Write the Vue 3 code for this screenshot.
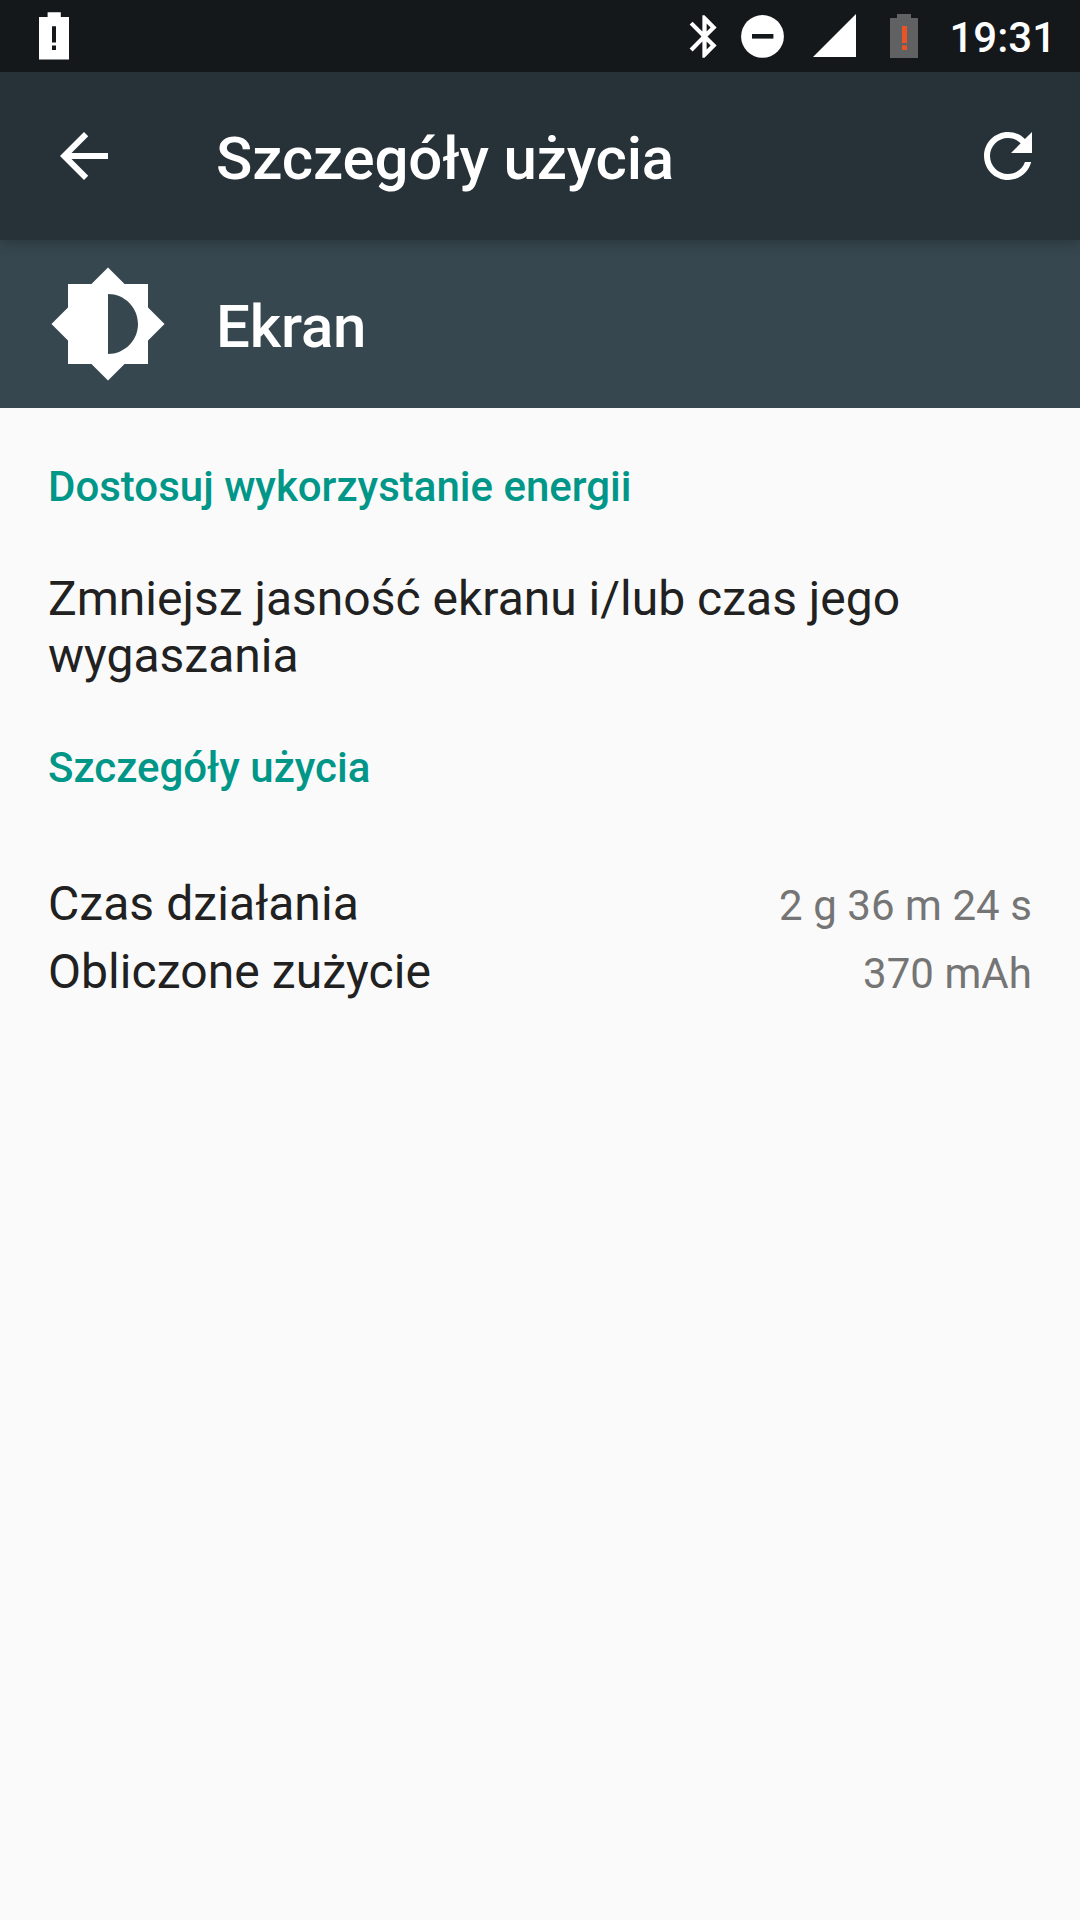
<template>
  <div class="screen">
    <div class="status-bar">
      <svg class="notification" width="30" height="72" viewBox="39 0 30 72">
        <path
          fill="#fff"
          fill-rule="evenodd"
          d="M47.6 12.3H60.8V17H69V59.4H39V17H47.6zM52 26.3V42.4H56V26.3zM52 45.6V50H56V45.6z"
        />
      </svg>
      <div class="status-icons">
        <svg class="bluetooth" width="51" height="51" viewBox="0 0 24 24">
          <path
            fill="#fff"
            d="M17.71 7.71L12 2h-1v7.59L6.41 5 5 6.41 10.59 12 5 17.59 6.41 19 11 14.41V22h1l5.71-5.71-4.3-4.29 4.3-4.29zM13 5.83l1.88 1.88L13 9.59V5.83zm1.88 10.46L13 18.17v-3.76l1.88 1.88z"
          />
        </svg>
        <svg class="dnd" width="44" height="72" viewBox="741 0 44 72">
          <circle cx="762.5" cy="36.4" r="21.4" fill="#fff" />
          <rect x="752" y="34" width="21.4" height="4.6" fill="#14181b" />
        </svg>
        <svg class="signal" width="43" height="72" viewBox="813 0 43 72">
          <path fill="#fff" d="M813 57L856 14V57z" />
        </svg>
        <svg class="battery" width="28" height="72" viewBox="890 0 28 72">
          <path fill="#5f6163" d="M897 14H911V18H918V58H890V18H897z" />
          <path fill="#e95325" d="M902 26H907V43H902zM902 45.3H907V50H902z" />
        </svg>
        <span class="clock">19:31</span>
      </div>
    </div>

    <header class="toolbar">
      <svg width="72" height="72" viewBox="0 0 24 24">
        <path
          fill="#fff"
          d="M20 11H7.83l5.59-5.59L12 4l-8 8 8 8 1.41-1.41L7.83 13H20v-2z"
        />
      </svg>
      <h1 class="title">Szczegóły użycia</h1>
      <svg class="refresh" width="72" height="72" viewBox="0 0 24 24">
        <path
          fill="#fff"
          d="M17.65 6.35C16.2 4.9 14.21 4 12 4c-4.42 0-7.99 3.58-7.99 8s3.57 8 7.99 8c3.73 0 6.84-2.55 7.73-6h-2.08c-.82 2.33-3.04 4-5.65 4-3.31 0-6-2.69-6-6s2.69-6 6-6c1.66 0 3.14.69 4.22 1.78L13 11h7V4l-2.35 2.35z"
        />
      </svg>
    </header>

    <div class="entity">
      <svg width="120" height="120" viewBox="0 0 24 24">
        <path
          fill="#fff"
          d="M20 15.31L23.31 12 20 8.69V4h-4.69L12 .69 8.69 4H4v4.69L.69 12 4 15.31V20h4.69L12 23.31 15.31 20H20v-4.69zM12 18V6c3.31 0 6 2.69 6 6s-2.69 6-6 6z"
        />
      </svg>
      <h2 class="title">Ekran</h2>
    </div>

    <main class="content">
      <h3 class="section">Dostosuj wykorzystanie energii</h3>
      <p class="hint">Zmniejsz jasność ekranu i/lub czas jego wygaszania</p>
      <h3 class="section">Szczegóły użycia</h3>
      <div class="details">
        <div v-for="row in details" :key="row.label" class="row">
          <span class="label">{{ row.label }}</span>
          <span class="value">{{ row.value }}</span>
        </div>
      </div>
    </main>
  </div>
</template>

<script setup>
const details = [
  { label: "Czas działania", value: "2 g 36 m 24 s" },
  { label: "Obliczone zużycie", value: "370 mAh" },
];
</script>

<style>
body {
  margin: 0;
  background-color: #fafafa;
}
</style>

<style scoped>
.screen {
  min-height: 1920px;
  background-color: #fafafa;
  color: #212121;
  font-family: Roboto, sans-serif;
}

.screen svg {
  display: block;
  flex: none;
}

h1,
h2,
h3,
p {
  margin: 0;
}

.status-bar {
  display: flex;
  justify-content: space-between;
  height: 72px;
  padding: 0 24px 0 39px;
  box-sizing: border-box;
  background-color: #14181b;
}

.status-icons {
  display: flex;
  align-items: center;
}

.dnd {
  margin-left: 11px;
}

.signal {
  margin-left: 28px;
}

.battery {
  margin-left: 34px;
}

.clock {
  margin-left: 31px;
  padding-top: 3px;
  color: #fff;
  font-size: 42px;
  font-weight: 500;
  line-height: 50px;
}

.toolbar {
  position: relative;
  display: flex;
  align-items: center;
  height: 168px;
  padding: 0 36px 0 48px;
  box-sizing: border-box;
  background-color: #263238;
  box-shadow: 0 3px 12px rgba(0, 0, 0, 0.25);
  clip-path: inset(0 0 -20px 0);
}

.title {
  padding-top: 5px;
  color: #fff;
  font-size: 60px;
  font-weight: 500;
  letter-spacing: -0.15px;
  line-height: 70px;
}

.toolbar .title {
  margin-left: 96px;
}

.refresh {
  margin-left: auto;
}

.entity {
  display: flex;
  align-items: center;
  height: 168px;
  padding-left: 48px;
  background-color: #37474f;
}

.entity .title {
  margin-left: 48px;
}

.content {
  padding: 54px 48px 0;
}

.section {
  color: #009688;
  font-size: 42px;
  font-weight: 500;
  line-height: 50px;
}

.hint {
  margin: 58px 0 59px;
  font-size: 48px;
  line-height: 57px;
}

.details {
  margin-top: 77px;
}

.row {
  display: flex;
  align-items: baseline;
  justify-content: space-between;
  height: 68px;
  line-height: 68px;
}

.label {
  font-size: 48px;
  letter-spacing: 0.07px;
}

.value {
  color: #757575;
  font-size: 42px;
  letter-spacing: 0.06px;
}
</style>
